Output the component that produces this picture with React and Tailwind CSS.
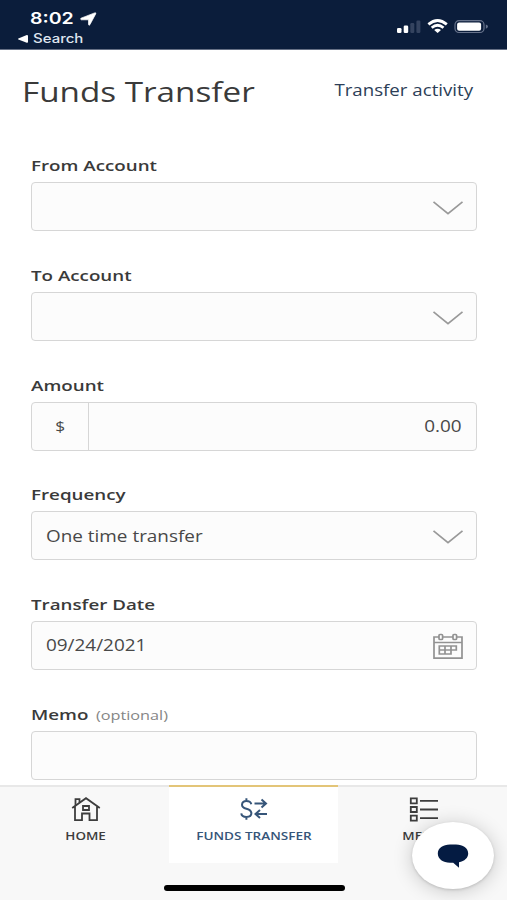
import React from "react";

function Chevron() {
  return (
    <svg className="mt-[3px] mr-[12.5px] h-[16px] w-[32px]" viewBox="0 0 32 16" fill="none" stroke="#999" strokeWidth="1.7">
      <path d="M1.5 1.8 L16 13.6 L30.5 1.8" />
    </svg>
  );
}

function Calendar() {
  return (
    <svg className="mr-[12.5px] mt-[2px] h-[27px] w-[32px]" viewBox="0 0 32 27" fill="none" stroke="#929292" strokeWidth="1.7">
      <path d="M7 4H2V25.2H30V4H25M11 4H21M2 9.5H30" />
      <rect x="7" y="1.5" width="3.6" height="5" rx="1" />
      <rect x="21" y="1.5" width="3.6" height="5" rx="1" />
      <path d="M7.3 13H24.3V17H19V21H7.3ZM7.3 17H19M13 13V21M19 13V17" />
    </svg>
  );
}

function Field({ label, hint, children }) {
  return (
    <div className="h-[109.65px]">
      <div className="flex h-[27px] origin-left scale-x-[1.25] items-start text-[15px] leading-[20px] font-semibold whitespace-nowrap text-[#3a3a3a]">
        {label}
        {hint && <span className="ml-[6px] mt-px text-[13px] font-normal text-[#858585]">{hint}</span>}
      </div>
      <div className="flex h-[49px] items-center rounded-[4px] border-[1.5px] border-[#d6d6d6] bg-[#fcfcfc] text-[15.5px] text-[#484848]">
        {children}
      </div>
    </div>
  );
}

function Value({ children }) {
  return <span className="mt-px ml-[14px] origin-left scale-x-[1.22] whitespace-nowrap">{children}</span>;
}

export default function App() {
  return (
    <div className="relative flex h-[900px] w-[507px] flex-col overflow-hidden bg-white font-['Open_Sans','Noto_Sans',sans-serif]">
      <header className="flex h-[50px] shrink-0 justify-between border-b border-[#667085] bg-[#0b1d3b] text-white">
        <div className="pl-[18px] pt-[8px] font-['Inter',sans-serif]">
          <div className="flex h-[21px] items-center pl-[12px]">
            <span className="w-[50px] origin-left scale-x-[1.22] text-[16px] leading-[21px] font-semibold whitespace-nowrap">8:02</span>
            <svg className="h-[14px] w-[17px]" viewBox="0 0 17 14" fill="#fff" stroke="#fff" strokeWidth=".7">
              <path d="M1 6.2 14.6.9Q16.4.4 15.7 1.9L9.9 12.7Q9 14 8.5 12.4V7.8H1.3Q0 7.3 1 6.2Z" />
            </svg>
          </div>
          <div className="mt-px flex h-[18px] items-center">
            <svg className="h-[8px] w-[10px]" viewBox="0 0 10 8" fill="#fff">
              <path d="M.4 3.4 8.8.1Q10 0 10 1V7Q10 8 8.8 7.8L.4 4.6Q-.3 4 .4 3.4Z" />
            </svg>
            <span className="ml-[5px] origin-left scale-x-[1.2] text-[12.5px] leading-[18px] font-medium text-[#dfe5ef]">Search</span>
          </div>
        </div>
        <svg className="mt-[17px] mr-[16px] h-[18px] w-[96px]" viewBox="0 0 96 18" fill="#fff">
          <rect x="2" y="11" width="4.5" height="5" rx="1.3" />
          <rect x="8.7" y="8.5" width="4.5" height="7.5" rx="1.3" />
          <rect x="15.3" y="6" width="4" height="10" rx="1.2" fill="#34435f" />
          <rect x="21.4" y="3.5" width="4" height="12.5" rx="1.2" fill="#34435f" />
          <g fill="none" stroke="#fff" strokeWidth="2.8">
            <path d="M33.4 7.4Q42.6-.4 51.8 7.4" />
            <path d="M36.7 10.8Q42.6 5.8 48.5 10.8" />
          </g>
          <path d="M39.2 12.9Q42.6 10.4 46 12.9L42.6 15.9Z" />
          <rect x="60" y="3.7" width="29" height="11.8" rx="4" fill="none" stroke="#67738c" strokeWidth="1.2" />
          <rect x="62.1" y="5.5" width="24" height="8.2" rx="2" />
          <path d="M90.8 7.5Q93 8 93 9.6T90.8 11.8Z" fill="#67738c" />
        </svg>
      </header>

      <main className="h-[735px] shrink-0 overflow-hidden">
        <div className="flex h-[105.3px] justify-between pt-[22px] pr-[34px] pl-[22px]">
          <h1 className="origin-left scale-x-[1.187] text-[28px] leading-[38px] whitespace-nowrap text-[#3a3a3a]">Funds Transfer</h1>
          <a className="mt-[7px] h-[22px] origin-right scale-x-[1.205] text-[15.5px] leading-[22px] whitespace-nowrap text-[#2c3e57]">Transfer activity</a>
        </div>
        <form className="pr-[30px] pl-[31px]">
          <Field label="From Account"><span className="flex-1" /><Chevron /></Field>
          <Field label="To Account"><span className="flex-1" /><Chevron /></Field>
          <Field label="Amount">
            <span className="flex h-full w-[57px] items-center justify-center border-r-[1.5px] border-[#d6d6d6]">
              <span className="mt-px scale-x-[1.15] text-[15px]">$</span>
            </span>
            <span className="mt-px mr-[14px] ml-auto origin-right scale-x-[1.22]">0.00</span>
          </Field>
          <Field label="Frequency"><Value>One time transfer</Value><span className="flex-1" /><Chevron /></Field>
          <Field label="Transfer Date"><Value>09/24/2021</Value><span className="flex-1" /><Calendar /></Field>
          <Field label="Memo" hint="(optional)" />
        </form>
      </main>

      <nav className="flex h-[115px] shrink-0 border-t-2 border-[#e8e8e8] bg-[#f8f8f8] text-[11px] leading-[16px] font-semibold text-[#3d3d3d]">
        <div className="flex w-[169px] flex-col items-center pt-[9px]">
          <svg className="ml-[3px] h-[26px] w-[30px]" viewBox="0 0 30 26" fill="none" stroke="#3d3d3d" strokeWidth="1.8">
            <path d="M1.2 12 15 2.2 28.8 12M4 10.5V24.2H11V17.5H18.5V24.2H26V10.5" />
            <path d="M4.5 9.4V3.2H8.5V6.6M12 10H18V14H12Z" />
          </svg>
          <span className="mt-[6px] ml-[2px] scale-x-[1.22]">HOME</span>
        </div>
        <div className="-mt-[2px] flex h-[78px] w-[169px] flex-col items-center border-t-2 border-[#e3c578] bg-white pt-[9px] text-[#365579]">
          <svg className="h-[26px] w-[30px]" viewBox="0 0 30 26" fill="none" stroke="#365579" strokeWidth="2">
            <path d="M12.3 8.2Q11.5 5.1 7.4 5.1T3 8.8Q3 11.7 7.4 12.8T12.4 17Q12.4 20.9 7.5 20.9T2.3 17.4M7.4 2.2V5.1M7.4 20.9V23.8" />
            <path d="M15.5 7.5H27M22.5 3.5 27 7.5 22.5 11.5M28 18H16.5M21 14 16.5 18 21 22" />
          </svg>
          <span className="mt-[6px] scale-x-[1.23] whitespace-nowrap">FUNDS TRANSFER</span>
        </div>
        <div className="flex w-[169px] flex-col items-center pt-[9px]">
          <svg className="ml-[2px] h-[26px] w-[30px]" viewBox="0 0 30 26" fill="none" stroke="#3d3d3d" strokeWidth="1.8">
            <path d="M1.8 2.3H7.8V7.3H1.8ZM1.8 11H7.8V16H1.8ZM1.8 19.7H7.8V24.7H1.8ZM11 4.8H29M11 13.5H29M11 22.2H29" />
          </svg>
          <span className="mt-[6px] scale-x-[1.22]">MENU</span>
        </div>
      </nav>

      <div className="absolute top-[888px] left-[164px] h-[6px] w-[181px] -translate-y-[3px] rounded-full bg-black" />
      <button className="absolute top-[822px] left-[412px] flex h-[67px] w-[82px] items-center justify-center rounded-[50%] bg-white shadow-[0_2px_20px_rgba(0,0,0,0.2),0_1px_3px_rgba(0,0,0,0.15)]">
        <svg className="h-[24px] w-[32px]" viewBox="0 0 32 24" fill="#041b42">
          <path d="M13 .5H19C26 .5 31.2 4 31.2 9.6 31.2 14 27.5 17.2 22 18.3V23.8L16.2 18.8H13C6 18.8 .8 15.2 .8 9.6S6 .5 13 .5Z" />
        </svg>
      </button>
    </div>
  );
}
